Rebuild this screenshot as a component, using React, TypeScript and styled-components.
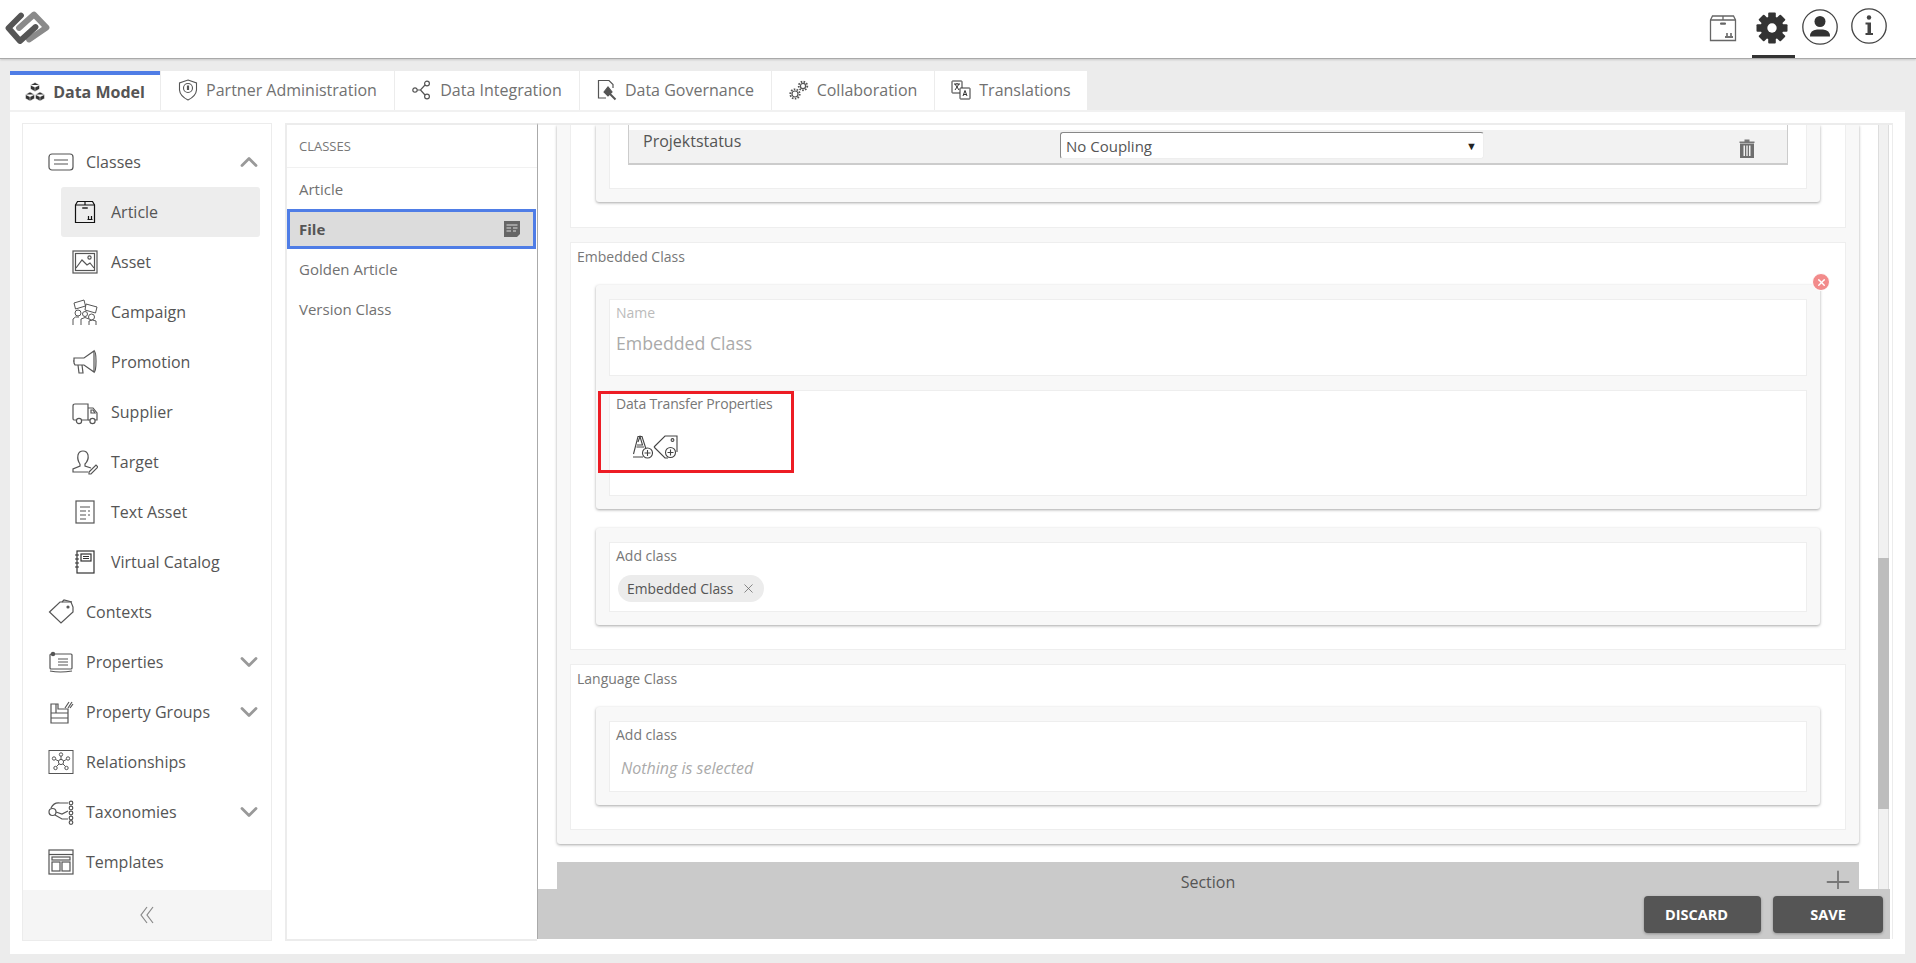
import React from 'react';
import styled, { createGlobalStyle } from 'styled-components';
import { ChevronUp, ChevronDown, Plus, X } from 'lucide-react';

const GlobalStyle = createGlobalStyle`
  html, body { margin: 0; padding: 0; background: #ececec; }
  body { font-family: "Open Sans", "Liberation Sans", sans-serif; color: #555; overflow: hidden; }
  * { box-sizing: border-box; }
`;

const Page = styled.div`
  width: 1916px;
  height: 963px;
  display: flex;
  flex-direction: column;
`;

// top bar
const Header = styled.header`
  height: 59px;
  flex: none;
  background: #fff;
  border-bottom: 1px solid #a9a9a9;
  box-shadow: 0 1px 2px rgba(0, 0, 0, 0.15);
  display: flex;
  align-items: flex-start;
  justify-content: space-between;
  padding: 0 22px 0 0;
`;

const Logo = styled.svg`
  width: 56px;
  height: 56px;
`;

const HeaderIcons = styled.div`
  display: flex;
  align-items: flex-start;
`;

const HeaderIcon = styled.div<{ $active?: boolean; $width: number; $top: number; $right?: number }>`
  width: ${(p) => p.$width}px;
  height: 58px;
  display: flex;
  justify-content: center;
  padding: ${(p) => p.$top}px ${(p) => p.$right || 0}px 0 0;
  border-bottom: 3px solid ${(p) => (p.$active ? '#333' : 'transparent')};
`;

// tab row
const Tabs = styled.nav`
  display: flex;
  flex: none;
  margin: 12px 0 0 10px;
  height: 39px;
`;

const Tab = styled.div<{ $active?: boolean; $width: number }>`
  width: ${(p) => p.$width}px;
  margin-right: 1px;
  padding-bottom: 2px;
  background: #fff;
  border-top: ${(p) => (p.$active ? '4px solid #4f7de6' : '0')};
  display: flex;
  align-items: center;
  justify-content: center;
  gap: 8px;
  font-size: 16px;
  font-weight: ${(p) => (p.$active ? 700 : 400)};
  color: ${(p) => (p.$active ? '#555' : '#717171')};
`;

const Body = styled.div`
  flex: none;
  width: 1895px;
  height: 844px;
  margin-left: 10px;
  background: #fff;
  border-top: 2px solid #f1f1f1;
  display: flex;
  align-items: flex-start;
  padding: 11px 0 0 12px;
`;

// left navigation
const SideNav = styled.aside`
  width: 250px;
  height: 818px;
  flex: none;
  border: 1px solid #ececec;
  display: flex;
  flex-direction: column;
`;

const NavList = styled.div`
  flex: 1;
  padding-top: 13px;
`;

const NavItem = styled.div<{ $child?: boolean; $selected?: boolean }>`
  height: 50px;
  display: flex;
  align-items: center;
  margin-left: ${(p) => (p.$child ? '38px' : '0')};
  margin-right: 11px;
  padding-left: ${(p) => (p.$child ? '11px' : '25px')};
  background: ${(p) => (p.$selected ? '#ededed' : 'transparent')};
  border-radius: 3px;
  font-size: 16px;
  color: #555;
  svg.nav-icon {
    flex: none;
    width: 26px;
    height: 26px;
    margin-right: ${(p) => (p.$child ? '13px' : '12px')};
  }
`;

const NavLabel = styled.span`
  flex: 1;
`;

const NavChevron = styled.span`
  display: flex;
  color: #999;
  margin-right: -3px;
`;

const CollapseBar = styled.div`
  height: 50px;
  flex: none;
  background: #f5f5f5;
  display: flex;
  align-items: center;
  justify-content: center;
`;

// classes list
const ClassList = styled.section`
  width: 252px;
  height: 818px;
  flex: none;
  margin-left: 13px;
  background: #fff;
  border-left: 2px solid #ececec;
  border-top: 2px solid #ececec;
  border-bottom: 2px solid #ececec;
`;

const ClassListTitle = styled.div`
  height: 43px;
  display: flex;
  align-items: center;
  padding-left: 12px;
  font-size: 13px;
  color: #777;
  border-bottom: 1px solid #f1f1f1;
  text-transform: uppercase;
`;

const ClassRows = styled.div`
  padding-top: 1px;
`;

const ClassRow = styled.div<{ $selected?: boolean }>`
  height: 40px;
  display: flex;
  align-items: center;
  justify-content: space-between;
  padding: ${(p) => (p.$selected ? '0 12px 0 9px' : '0 12px')};
  margin: ${(p) => (p.$selected ? '0 1px 0 0' : '0')};
  border: ${(p) => (p.$selected ? '3px solid #4f7de6' : '0')};
  background: ${(p) => (p.$selected ? '#dcdcdc' : 'transparent')};
  font-size: 15px;
  font-weight: ${(p) => (p.$selected ? 700 : 400)};
  color: ${(p) => (p.$selected ? '#555' : '#717171')};
`;

// main scroll panel
const Main = styled.main`
  position: relative;
  flex: none;
  width: 1356px;
  height: 816px;
  border-left: 1px solid #aaa;
  border-top: 2px solid #ececec;
  border-right: 1px solid #ececec;
  overflow: hidden;
  display: flex;
`;

const Scroller = styled.div`
  flex: 1;
  padding: 0 19px;
  display: flex;
  flex-direction: column;
`;

const OuterCard = styled.div`
  flex: none;
  background: #f8f8f8;
  padding: 0 13px 14px;
  border-radius: 0 0 3px 3px;
  box-shadow: 0 1px 3px rgba(0, 0, 0, 0.35);
  display: flex;
  flex-direction: column;
  gap: 14px;
`;

const Fieldset = styled.div<{ $clipped?: boolean }>`
  background: #fff;
  border: 1px solid #eeeeee;
  border-top: ${(p) => (p.$clipped ? '0' : '1px solid #eeeeee')};
  padding: ${(p) => (p.$clipped ? '0 25px 25px' : '0 25px 24px')};
`;

const Legend = styled.div`
  height: 26px;
  margin: 0 -25px 16px;
  display: flex;
  align-items: center;
  padding-left: 6px;
  font-size: 14px;
  color: #777;
`;

const Card = styled.div<{ $clipped?: boolean }>`
  position: relative;
  background: #f8f8f8;
  border-radius: ${(p) => (p.$clipped ? '0 0 3px 3px' : '3px')};
  padding: ${(p) => (p.$clipped ? '0 13px 13px' : '14px 13px 13px')};
  box-shadow: 0 1px 3px rgba(0, 0, 0, 0.35);
  display: flex;
  flex-direction: column;
  gap: 14px;
  & + & {
    margin-top: 19px;
  }
`;

const Field = styled.div<{ $height: number }>`
  height: ${(p) => p.$height}px;
  background: #fff;
  border: 1px solid #eeeeee;
  padding: 3px 6px 0 6px;
`;

const FieldLabel = styled.div<{ $muted?: boolean; $tight?: boolean }>`
  height: 20px;
  line-height: 20px;
  font-size: 14px;
  letter-spacing: ${(p) => (p.$tight ? '-0.17px' : '0')};
  color: ${(p) => (p.$muted ? '#bbb' : '#777')};
`;

const FieldValue = styled.div`
  margin-top: 8px;
  font-size: 17.7px;
  line-height: 24px;
  color: #aaa;
`;

const Placeholder = styled.div`
  margin-top: 11px;
  margin-left: 5px;
  line-height: 24px;
  font-size: 16px;
  font-style: italic;
  color: #aaa;
`;

const TableFrame = styled.div`
  padding: 0 18px;
  background: #fff;
  border: 1px solid #eeeeee;
  border-top: 0;
  height: 64px;
`;

const TableRow = styled.div`
  height: 40px;
  padding-top: 5px;
  border-left: 1px solid #ccc;
  border-right: 1px solid #ccc;
  border-bottom: 2px solid #ccc;
`;

const TableRowInner = styled.div`
  height: 33px;
  background: #f2f2f2;
  display: flex;
  align-items: flex-start;
  padding-left: 14px;
`;

const RowName = styled.div`
  width: 417px;
  font-size: 16px;
  line-height: 22px;
  color: #555;
`;

const FakeSelect = styled.div`
  width: 424px;
  height: 27px;
  margin-top: 2px;
  background: #fff;
  border: 1px solid;
  border-color: #888 #eee #eee #888;
  border-radius: 3px;
  display: flex;
  align-items: center;
  justify-content: space-between;
  padding: 0 6px 0 5px;
  font-size: 15px;
  color: #555;
`;

const SelectArrow = styled.span`
  font-size: 11px;
  color: #222;
`;

const TrashIcon = styled.svg`
  width: 16px;
  height: 19px;
  margin: 9px 0 0 255px;
`;

const CloseBadge = styled.div`
  position: absolute;
  top: -12px;
  right: -10px;
  width: 18px;
  height: 18px;
  border-radius: 50%;
  background: #f28b8b;
  border: 1px solid #fff;
  color: #fff;
  display: flex;
  align-items: center;
  justify-content: center;
`;

const IconRow = styled.div`
  display: flex;
  align-items: flex-end;
  margin: 20px 0 0 16px;
  height: 25px;
`;

const Highlight = styled.div`
  position: absolute;
  left: 2px;
  top: 106px;
  width: 196px;
  height: 82px;
  border: 3px solid #ed1c24;
  pointer-events: none;
`;

const Pill = styled.div`
  display: inline-flex;
  align-items: center;
  height: 27px;
  margin: 9px 0 0 2px;
  padding: 0 8px 0 9px;
  gap: 8px;
  background: #ececec;
  border-radius: 14px;
  font-size: 13.8px;
  color: #555;
`;

const SectionBar = styled.div`
  flex: none;
  height: 60px;
  margin-top: 18px;
  background: #cacaca;
  display: flex;
  justify-content: center;
  padding-top: 9px;
  font-size: 16px;
  line-height: 22px;
  color: #555;
  position: relative;
`;

const SectionPlus = styled.span`
  position: absolute;
  right: 3px;
  top: 2px;
  color: #777;
  display: flex;
`;

const ScrollTrack = styled.div`
  flex: none;
  width: 11px;
  margin-right: 3px;
  background: #f1f1f1;
  border-left: 1px solid #ddd;
  border-right: 1px solid #ddd;
  padding-top: 433px;
`;

const ScrollThumb = styled.div`
  height: 251px;
  margin: 0 -1px;
  background: #bdbdbd;
`;

const FooterBar = styled.div`
  position: absolute;
  left: 0;
  right: 2px;
  bottom: 0;
  height: 50px;
  background: #cacaca;
  display: flex;
  justify-content: flex-end;
  align-items: center;
  gap: 12px;
  padding-right: 7px;
`;

const ActionButton = styled.button<{ $width: number; $pad?: boolean }>`
  width: ${(p) => p.$width}px;
  height: 37px;
  border: 0;
  border-radius: 4px;
  background: #555;
  color: #fff;
  font-family: inherit;
  font-size: 14.5px;
  font-weight: 700;
  text-transform: uppercase;
  text-align: center;
  padding: 0 ${(p) => (p.$pad ? '12px' : '0')} 0 0;
  box-shadow: 0 1px 3px rgba(0, 0, 0, 0.3);
`;

// drawn icons
type IconProps = { className?: string };

const Line = { fill: 'none', stroke: '#555', strokeWidth: 1.2 };

const BoxIcon = ({ className }: IconProps) => (
  <svg className={className} viewBox="0 0 26 26">
    <g fill="none" stroke="#111" strokeWidth={1.2}>
      <path d="M3.5 6 L5.5 2.5 H20.5 L22.5 6 V23.5 H3.5 Z" />
      <path d="M3.5 6 H22.5 M13 2.5 V6" />
      <path d="M15.5 20.5 H20.5 M16.5 20 V17 M19.5 20 V17" />
    </g>
    <rect x="10" y="8" width="6" height="2" rx="1" fill="#555" />
  </svg>
);

const AssetIcon = ({ className }: IconProps) => (
  <svg className={className} viewBox="0 0 26 26">
    <g {...Line}>
      <rect x="1" y="2" width="24" height="22" />
      <rect x="3.5" y="4.5" width="19" height="17" />
      <path d="M4 19 L10 11 L15 16 L18 14 L22 19" />
      <circle cx="17.5" cy="8.5" r="1.6" />
    </g>
  </svg>
);

const CampaignIcon = ({ className }: IconProps) => (
  <svg className={className} viewBox="0 0 26 26">
    <g {...Line} strokeWidth={1}>
      <path d="M2 4 L12 1 L13.5 7 L3.5 10 Z" />
      <path d="M14 5 L25 8 L23.5 14 L13 11 Z" />
      <circle cx="6" cy="14" r="3" />
      <circle cx="19.5" cy="18" r="3" />
      <circle cx="13" cy="15" r="2.5" />
      <path d="M1 26 V20 Q3 17 7 18 M9 26 V20 Q13 17 17 20 M17 26 V22 Q20 20 24 22 V26" />
    </g>
  </svg>
);

const PromotionIcon = ({ className }: IconProps) => (
  <svg className={className} viewBox="0 0 26 26">
    <g {...Line}>
      <path d="M2 9 H12 L22 2 V23 L12 16 H3 L2 14 Z" />
      <path d="M22 2 Q24 2 24 12 Q24 23 22 23" />
      <path d="M6 16 L7 24 H11 L10 16" />
      <path d="M2 12 H1" />
    </g>
  </svg>
);

const TruckIcon = ({ className }: IconProps) => (
  <svg className={className} viewBox="0 0 26 26">
    <g {...Line}>
      <path d="M4 21 H2 Q1 21 1 19 V7 Q1 5 3 5 H16 V21 H10" />
      <path d="M16 9 H21 L25 14 V21 H23 M18 21 H16" />
      <path d="M19 11 H21 L23 14 H19 Z" />
      <circle cx="7" cy="22" r="2.6" />
      <circle cx="20.5" cy="22" r="2.6" />
    </g>
  </svg>
);

const TargetIcon = ({ className }: IconProps) => (
  <svg className={className} viewBox="0 0 26 26">
    <g {...Line}>
      <path d="M8 15 Q5 11 6 6 Q7 2 11 2 Q15 2 16 6 Q17 11 13 15 V17 L19 19" />
      <path d="M8 15 V17 L1 20 V23 H16" />
      <path d="M17 23 L24 16 L26 18 L19 25 H17 Z" />
    </g>
  </svg>
);

const TextAssetIcon = ({ className }: IconProps) => (
  <svg className={className} viewBox="0 0 26 26">
    <g {...Line}>
      <rect x="4" y="2" width="18" height="22" />
      <path d="M8 8 H18 M8 12 H14 M16 12 H18 M8 16 H14 M16 16 H18 M8 20 H14" />
    </g>
  </svg>
);

const CatalogIcon = ({ className }: IconProps) => (
  <svg className={className} viewBox="0 0 26 26">
    <g fill="none" stroke="#333" strokeWidth={1.2}>
      <rect x="5" y="2" width="17" height="22" />
      <path d="M3 6 H7 M3 10 H7 M3 14 H7 M3 18 H7" />
      <rect x="9" y="5" width="10" height="7" />
      <path d="M11 7.5 H17 M11 9.5 H17" />
    </g>
  </svg>
);

const ClassesIcon = ({ className }: IconProps) => (
  <svg className={className} viewBox="0 0 26 26">
    <g {...Line}>
      <rect x="1" y="5" width="24" height="16" rx="3" />
      <path d="M6 11 H20 M6 15 H20" />
    </g>
  </svg>
);

const ContextIcon = ({ className }: IconProps) => (
  <svg className={className} viewBox="0 0 26 26">
    <g {...Line}>
      <path d="M1.5 13 L12 3 H23 L25 8 V13 L13 24 Z" />
      <path d="M14 3 L16 1 L24 3" />
      <circle cx="20" cy="8" r="1" fill="#555" />
    </g>
  </svg>
);

const PropertiesIcon = ({ className }: IconProps) => (
  <svg className={className} viewBox="0 0 26 26">
    <g {...Line}>
      <rect x="2" y="5" width="22" height="15" rx="1" />
      <path d="M2 22 Q12 24 24 22 M10 10 H20 M10 13 H20 M10 16 H20" />
      <circle cx="5" cy="5" r="1.6" fill="#555" />
    </g>
  </svg>
);

const GroupsIcon = ({ className }: IconProps) => (
  <svg className={className} viewBox="0 0 26 26">
    <g {...Line}>
      <path d="M3 24 V5 H10 V10 H20 V24 Z" />
      <path d="M3 14 H20 M3 19 H20 M8 5 V14" />
      <path d="M17 9 L21 3 M20 9 L24 3 M22 9 L25 5" />
    </g>
  </svg>
);

const RelationsIcon = ({ className }: IconProps) => (
  <svg className={className} viewBox="0 0 26 26">
    <g {...Line} strokeWidth={1}>
      <rect x="1" y="1.5" width="24" height="23" />
      <circle cx="13" cy="13" r="2.6" />
      <circle cx="13" cy="5.5" r="1.7" />
      <circle cx="6" cy="9.5" r="1.7" />
      <circle cx="20" cy="9.5" r="1.7" />
      <circle cx="7.5" cy="19" r="1.7" />
      <circle cx="18.5" cy="19" r="1.7" />
      <path d="M13 7 V10.5 M7.5 10.5 L10.6 12 M18.5 10.5 L15.4 12 M8.5 17.5 L11 15 M17.5 17.5 L15 15" />
    </g>
  </svg>
);

const TaxonomyIcon = ({ className }: IconProps) => (
  <svg className={className} viewBox="0 0 26 26">
    <g {...Line}>
      <circle cx="4.5" cy="13" r="3.5" />
      <path d="M3 9 Q6 3 12 4 H20 M8 13 L14 15 L20 12 M7 16 L14 20 H20" />
      <circle cx="23" cy="4" r="1.8" />
      <circle cx="23" cy="9" r="1.8" />
      <circle cx="23" cy="14" r="1.8" />
      <circle cx="23" cy="19" r="1.8" />
      <circle cx="23" cy="23.5" r="1.8" />
    </g>
  </svg>
);

const TemplatesIcon = ({ className }: IconProps) => (
  <svg className={className} viewBox="0 0 26 26">
    <g {...Line}>
      <rect x="1" y="1" width="24" height="24" />
      <path d="M1 5.5 H25" />
      <rect x="4" y="8" width="18" height="3" />
      <rect x="4" y="13" width="8" height="9" />
      <rect x="14" y="13" width="8" height="9" />
    </g>
  </svg>
);

const NAV = [
  { label: 'Classes', Icon: ClassesIcon, chevron: 'up' },
  { label: 'Article', Icon: BoxIcon, child: true, selected: true },
  { label: 'Asset', Icon: AssetIcon, child: true },
  { label: 'Campaign', Icon: CampaignIcon, child: true },
  { label: 'Promotion', Icon: PromotionIcon, child: true },
  { label: 'Supplier', Icon: TruckIcon, child: true },
  { label: 'Target', Icon: TargetIcon, child: true },
  { label: 'Text Asset', Icon: TextAssetIcon, child: true },
  { label: 'Virtual Catalog', Icon: CatalogIcon, child: true },
  { label: 'Contexts', Icon: ContextIcon },
  { label: 'Properties', Icon: PropertiesIcon, chevron: 'down' },
  { label: 'Property Groups', Icon: GroupsIcon, chevron: 'down' },
  { label: 'Relationships', Icon: RelationsIcon },
  { label: 'Taxonomies', Icon: TaxonomyIcon, chevron: 'down' },
  { label: 'Templates', Icon: TemplatesIcon },
];

const GEAR_TEETH = [0, 45, 90, 135];

const TabIcon = ({ name }: { name: string }) => {
  if (name === 'model')
    return (
      <svg width="20" height="20" viewBox="0 0 20 20" fill="#333" stroke="#fff" strokeWidth="0.5">
        <path d="M10 0.5 L14.5 3 V7 L10 9.5 L5.5 7 V3 Z M5.5 3 L10 5.3 L14.5 3 M10 5.3 V9.5" />
        <path d="M5 10 L9.5 12.5 V16.5 L5 19 L0.5 16.5 V12.5 Z M0.5 12.5 L5 14.8 L9.5 12.5 M5 14.8 V19" />
        <path d="M15 10 L19.5 12.5 V16.5 L15 19 L10.5 16.5 V12.5 Z M10.5 12.5 L15 14.8 L19.5 12.5 M15 14.8 V19" />
      </svg>
    );
  if (name === 'partner')
    return (
      <svg width="20" height="22" viewBox="0 0 20 22" fill="none" stroke="#555" strokeWidth="1.1">
        <path d="M10 1 L18.5 4 V11 Q18 17 10 21 Q2 17 1.5 11 V4 Z" />
        <circle cx="10" cy="9" r="4.5" />
        <path d="M10 6.5 V11" strokeWidth="2.2" />
      </svg>
    );
  if (name === 'integration')
    return (
      <svg width="20" height="20" viewBox="0 0 20 20" fill="none" stroke="#555" strokeWidth="1.2">
        <circle cx="3" cy="10" r="2.2" />
        <circle cx="15" cy="3.5" r="2.4" />
        <circle cx="15" cy="16.5" r="2.4" />
        <path d="M5.2 10 H8.5 L13 5 M8.5 10 L13 15" />
      </svg>
    );
  if (name === 'governance')
    return (
      <svg width="20" height="22" viewBox="0 0 20 22" fill="none" stroke="#555" strokeWidth="1.2">
        <path d="M9 19 H1.5 V1.5 H12 L16 5.5 V9" />
        <path d="M7 13 L11 8 L15 13 L11 17 Z" fill="#555" />
        <path d="M13 15 L18.5 20.5" strokeWidth="2" />
      </svg>
    );
  if (name === 'collaboration')
    return (
      <svg width="20" height="20" viewBox="0 0 20 20" fill="none" stroke="#555">
        <circle cx="6" cy="14" r="3" strokeWidth="1.2" />
        <circle cx="6" cy="14" r="4.7" strokeWidth="1.8" strokeDasharray="1.6 1.3" />
        <circle cx="14" cy="6" r="2.6" strokeWidth="1.2" />
        <circle cx="14" cy="6" r="4.3" strokeWidth="1.8" strokeDasharray="1.6 1.3" />
      </svg>
    );
  return (
    <svg width="20" height="20" viewBox="0 0 20 20" fill="none" stroke="#333" strokeWidth="1">
      <rect x="1" y="1" width="10" height="12" rx="0.5" />
      <rect x="9" y="8" width="10" height="11" rx="0.5" fill="#fff" />
      <path d="M3 4 H9 M6 3 V4 M4 4 L8 10 M8 4 L4 10" />
      <path d="M12 16 L14 10.5 L16 16 M12.7 14.5 H15.3" />
    </svg>
  );
};

const App = () => (
  <Page>
    <GlobalStyle />
    <Header>
      <Logo viewBox="0 0 56 56" fill="none" strokeWidth="5.8" strokeLinejoin="round" strokeLinecap="round">
        <path d="M29 39.5 L46.5 27.5 L34 14.5 L19 28" stroke="#8a8a8a" />
        <path d="M21 15.5 L8.5 28 L20 41 L35.5 27" stroke="#555" />
      </Logo>
      <HeaderIcons>
        <HeaderIcon $width={55} $top={14} $right={4}>
          <svg width="28" height="28" viewBox="0 0 28 28" fill="none" stroke="#666" strokeWidth="1.3">
            <path d="M1.5 6 L3.5 2 H24.5 L26.5 6 V26.5 H1.5 Z" />
            <path d="M1.5 6 H26.5 M14 2 V6" />
            <rect x="11" y="8.5" width="6" height="2.2" rx="1" fill="#666" stroke="none" />
            <path d="M16 23 H24 M18 22 V19 M22 22 V19" stroke="#444" />
          </svg>
        </HeaderIcon>
        <HeaderIcon $active $width={43} $top={12} $right={4}>
          <svg width="32" height="32" viewBox="0 0 32 32" fill="#333">
            <circle cx="16" cy="16" r="11.5" />
            {GEAR_TEETH.map((deg) => (
              <rect key={deg} x="12.2" y="0.5" width="7.6" height="31" rx="1" transform={`rotate(${deg} 16 16)`} />
            ))}
            <circle cx="16" cy="16" r="4.7" fill="#fff" />
          </svg>
        </HeaderIcon>
        <HeaderIcon $width={49} $top={9}>
          <svg width="36" height="36" viewBox="0 0 36 36" fill="#333">
            <circle cx="18" cy="18" r="17.2" fill="none" stroke="#444" strokeWidth="1.3" />
            <circle cx="18" cy="12.5" r="5.5" />
            <path d="M8 27.5 Q8 21 15 20.5 H21 Q28 21 28 27.5 Z" />
          </svg>
        </HeaderIcon>
        <HeaderIcon $width={50} $top={8}>
          <svg width="36" height="36" viewBox="0 0 36 36" fill="#444">
            <circle cx="18" cy="18" r="17.2" fill="none" stroke="#444" strokeWidth="1.3" />
            <circle cx="18" cy="9.5" r="2.2" />
            <path d="M14.5 14.5 H20 V25 H22 V27 H14.5 V25 H16.5 V16.5 H14.5 Z" />
          </svg>
        </HeaderIcon>
      </HeaderIcons>
    </Header>

    <Tabs>
      <Tab $active $width={150}><TabIcon name="model" />Data Model</Tab>
      <Tab $width={233}><TabIcon name="partner" />Partner Administration</Tab>
      <Tab $width={184}><TabIcon name="integration" />Data Integration</Tab>
      <Tab $width={191}><TabIcon name="governance" />Data Governance</Tab>
      <Tab $width={162}><TabIcon name="collaboration" />Collaboration</Tab>
      <Tab $width={152}><TabIcon name="translations" />Translations</Tab>
    </Tabs>

    <Body>
      <SideNav>
        <NavList>
          {NAV.map(({ label, Icon, child, selected, chevron }) => (
            <NavItem key={label} $child={child} $selected={selected}>
              <Icon className="nav-icon" />
              <NavLabel>{label}</NavLabel>
              {chevron && (
                <NavChevron>
                  {chevron === 'up' ? <ChevronUp size={28} strokeWidth={2.4} /> : <ChevronDown size={28} strokeWidth={2.4} />}
                </NavChevron>
              )}
            </NavItem>
          ))}
        </NavList>
        <CollapseBar>
          <svg width="14" height="18" viewBox="0 0 14 18" fill="none" stroke="#888" strokeWidth="1.2">
            <path d="M7 1 L1 9 L7 17 M13 1 L7 9 L13 17" />
          </svg>
        </CollapseBar>
      </SideNav>

      <ClassList>
        <ClassListTitle>Classes</ClassListTitle>
        <ClassRows>
          <ClassRow>Article</ClassRow>
          <ClassRow $selected>
            File
            <svg width="18" height="18" viewBox="0 0 18 18">
              <path d="M1 1 H17 V14 L14 17 H1 Z" fill="#666" />
              <path d="M3.5 5 H14.5 M3.5 8 H8 M3.5 11 H8 M10 8 H14.5 M10 11 H13" stroke="#dcdcdc" strokeWidth="1.2" />
            </svg>
          </ClassRow>
          <ClassRow>Golden Article</ClassRow>
          <ClassRow>Version Class</ClassRow>
        </ClassRows>
      </ClassList>

      <Main>
        <Scroller>
          <OuterCard>
            <Fieldset $clipped>
              <Card $clipped>
                <TableFrame>
                  <TableRow>
                    <TableRowInner>
                      <RowName>Projektstatus</RowName>
                      <FakeSelect>
                        No Coupling
                        <SelectArrow>▼</SelectArrow>
                      </FakeSelect>
                      <TrashIcon viewBox="0 0 16 19">
                        <path d="M5.5 0.5 H10.5 V2.5 H15.5 V4 H0.5 V2.5 H5.5 Z" fill="#777" />
                        <path d="M1 4.5 H15 V19 H1 Z M4.5 6.5 V17 H6 V6.5 Z M7.3 6.5 V17 H8.7 V6.5 Z M10 6.5 V17 H11.5 V6.5 Z" fill="#6f6f6f" fillRule="evenodd" />
                      </TrashIcon>
                    </TableRowInner>
                  </TableRow>
                </TableFrame>
              </Card>
            </Fieldset>

            <Fieldset>
              <Legend>Embedded Class</Legend>
              <Card>
                <CloseBadge><X size={11} strokeWidth={3} /></CloseBadge>
                <Field $height={77}>
                  <FieldLabel $muted>Name</FieldLabel>
                  <FieldValue>Embedded Class</FieldValue>
                </Field>
                <Field $height={106}>
                  <FieldLabel $tight>Data Transfer Properties</FieldLabel>
                  <IconRow>
                    <svg width="21" height="24" viewBox="0 0 21 24" fill="none" stroke="#444" strokeWidth="1.1">
                      <path d="M1 22 H11 M1.5 19 L6 1.5 H10 L14 14 M4.5 12 H12 M6 7 L8 1.5 L10.5 10 H5" />
                      <circle cx="15.5" cy="18" r="5" />
                      <path d="M15.5 15 V21 M12.5 18 H18.5" />
                    </svg>
                    <svg width="25" height="25" viewBox="0 0 25 25" fill="none" stroke="#444" strokeWidth="1.1">
                      <path d="M1 13 L12 2 H24 V18 M15 24 H12 L1 13" />
                      <circle cx="19.5" cy="6" r="1.4" />
                      <circle cx="17.5" cy="18.5" r="5" />
                      <path d="M17.5 15.5 V21.5 M14.5 18.5 H20.5" />
                    </svg>
                  </IconRow>
                </Field>
                <Highlight />
              </Card>
              <Card>
                <Field $height={70}>
                  <FieldLabel>Add class</FieldLabel>
                  <Pill>
                    Embedded Class
                    <X size={15} strokeWidth={1.2} color="#666" />
                  </Pill>
                </Field>
              </Card>
            </Fieldset>

            <Fieldset>
              <Legend>Language Class</Legend>
              <Card>
                <Field $height={71}>
                  <FieldLabel>Add class</FieldLabel>
                  <Placeholder>Nothing is selected</Placeholder>
                </Field>
              </Card>
            </Fieldset>
          </OuterCard>
          <SectionBar>
            Section
            <SectionPlus><Plus size={36} strokeWidth={1.2} /></SectionPlus>
          </SectionBar>
        </Scroller>
        <ScrollTrack>
          <ScrollThumb />
        </ScrollTrack>
        <FooterBar>
          <ActionButton $width={117} $pad>Discard</ActionButton>
          <ActionButton $width={110}>Save</ActionButton>
        </FooterBar>
      </Main>
    </Body>
  </Page>
);

export default App;
